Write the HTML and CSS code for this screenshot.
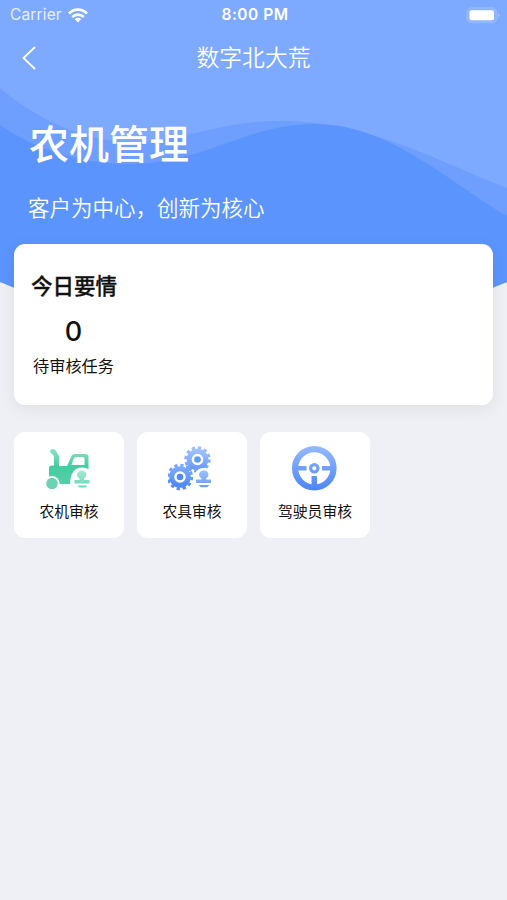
FILE: index.html
```html
<!DOCTYPE html>
<html lang="zh-CN">
<head>
    <meta charset="UTF-8">
    <meta name="viewport" content="width=device-width, initial-scale=1.0">
    <title>数字北大荒</title>
    <link rel="stylesheet" href="styles.css">
</head>

<body>
    <header class="hero">
        <svg class="hero-bg" viewBox="0 0 507 310" preserveAspectRatio="none">
            <path fill="#7da9ff" d="M0 0H507V282Q380 310 253 310T0 282Z"/>
            <path fill="#6e9fff" d="M0 88C35 118 85 143 135 142C185 141 220 121 280 121C365 120 430 158 507 188V282Q380 310 253 310T0 282Z"/>
            <path fill="#5c94fe" d="M0 125C35 149 80 164 130 164C205 164 245 124 315 124C390 124 450 183 507 216V282L485 291Q253 330 22 291L0 282Z"/>
        </svg>

        <div class="hero-content">
            <div class="status-bar">
                <div class="carrier">
                    <span>Carrier</span>
                    <svg width="20" height="15" viewBox="0 0 20 15" fill="none" stroke="#fff" stroke-width="2.7">
                        <path d="M1 5.5C6 .4 14 .4 19 5.5"/>
                        <path d="M4.2 9C7.6 5.8 12.4 5.8 15.8 9"/>
                        <path fill="#fff" stroke="none" d="M6.8 11.2Q10 8.4 13.2 11.2L10 14.6Z"/>
                    </svg>
                </div>
                <div class="time">8:00 PM</div>
                <svg class="battery" width="34" height="17" viewBox="0 0 34 17">
                    <rect x=".8" y=".8" width="30" height="15" rx="4.5" fill="#8fb6ff" stroke="#98bbff"/>
                    <path d="M32 6Q35 8.300 32 10.500Z" fill="#a3c3ff"/>
                    <rect x="3.500" y="3.300" width="24.500" height="10" rx="2" fill="#fff"/>
                </svg>
            </div>

            <nav class="nav-bar">
                <svg class="back" width="14" height="24" viewBox="0 0 14 24" fill="none" stroke="#fff" stroke-width="1.8">
                    <path d="M13 1L1.500 12L13 23"/>
                </svg>
                <div class="nav-title">数字北大荒</div>
            </nav>

            <h1>农机管理</h1>
            <p class="slogan">客户为中心，创新为核心</p>
        </div>
    </header>

    <main>
        <section class="card">
            <h2>今日要情</h2>
            <div class="stat">
                <div class="stat-num">0</div>
                <div class="stat-label">待审核任务</div>
            </div>
        </section>

        <section class="menu">
            <div class="menu-item">
                <svg width="48" height="48" viewBox="0 0 48 48">
                    <defs>
                        <linearGradient id="green" x1="0" y1="0" x2="0" y2="1">
                            <stop offset="0" stop-color="#8ce2c5"/>
                            <stop offset=".5" stop-color="#45cca1"/>
                            <stop offset="1" stop-color="#55cfa9"/>
                        </linearGradient>
                        <linearGradient id="mint" x1="0" y1="0" x2="0" y2="1">
                            <stop offset="0" stop-color="#a7e8d4"/>
                            <stop offset="1" stop-color="#6cd5b5"/>
                        </linearGradient>
                    </defs>
                    <path fill="url(#green)" fill-rule="evenodd" d="M5 7Q5 4 8 4Q10 4 11 6L14 11V21H22L26 12Q27 9 30 9H40Q43.500 9 43.500 12V39H4V23Q4 20.500 6.500 20.500H9V11L5 7ZM26.500 20H39.500V14Q39.500 12 37.500 12H31.500Q29.500 12 28.500 14Z"/>
                    <circle cx="7" cy="38.500" r="7.500" fill="#fff"/>
                    <circle cx="7" cy="38.500" r="5.800" fill="#6bd3b3"/>
                    <path fill="#fff" d="M25 41Q25 22.500 37 22.500Q46 22.500 48 31V46H26Z"/>
                    <path fill="url(#mint)" d="M32 29.500A4.800 4.800 0 0 1 41.500 29.500Q41.500 32 39 33.500V35H44.500V38.500H29.500V35H34.500V33.500Q32 32 32 29.500ZM33 40.500H42Q42 42.500 40 42.500H35Q33 42.500 33 40.500Z"/>
                </svg>
                <span>农机审核</span>
            </div>

            <div class="menu-item">
                <svg width="48" height="48" viewBox="0 0 48 48">
                    <defs>
                        <linearGradient id="blueLight" x1="0" y1="0" x2="0" y2="1">
                            <stop offset="0" stop-color="#9dc0ff"/>
                            <stop offset="1" stop-color="#6b9cfd"/>
                        </linearGradient>
                        <linearGradient id="blue" x1="0" y1="0" x2="0" y2="1">
                            <stop offset="0" stop-color="#79a8fe"/>
                            <stop offset="1" stop-color="#4f89fa"/>
                        </linearGradient>
                    </defs>
                    <g fill="none" stroke="url(#blueLight)">
                        <circle cx="29.500" cy="14.500" r="8.300" stroke-width="5"/>
                        <circle cx="29.500" cy="14.500" r="11.800" stroke-width="2.800" stroke-dasharray="3.300 2.878"/>
                    </g>
                    <circle cx="29.500" cy="14.500" r="3.300" fill="#6399fc"/>
                    <g fill="none" stroke="url(#blue)">
                        <circle cx="12" cy="32" r="8.300" stroke-width="5"/>
                        <circle cx="12" cy="32" r="11.800" stroke-width="2.800" stroke-dasharray="3.300 2.878"/>
                    </g>
                    <circle cx="12" cy="32" r="3.300" fill="#4f89fa"/>
                    <circle cx="21" cy="23.300" r="2.200" fill="none" stroke="#6b9cfd" stroke-width="1.500"/>
                    <path fill="#fff" d="M25.500 42Q24 23 35.500 23Q46 23 48 31V46H26Z"/>
                    <path fill="url(#blueLight)" d="M31 29.500A4.800 4.800 0 0 1 40.500 29.500Q40.500 32 38 33.500V34.500H43V38H28V34.500H33.500V33.500Q31 32 31 29.500ZM31 40H41Q40.500 42.200 38.500 42.200H33.500Q31.500 42.200 31 40Z"/>
                </svg>
                <span>农具审核</span>
            </div>

            <div class="menu-item">
                <svg width="48" height="48" viewBox="0 0 48 48">
                    <defs>
                        <linearGradient id="wheel" gradientUnits="userSpaceOnUse" x1="0" y1="1" x2="0" y2="46">
                            <stop offset="0" stop-color="#94baff"/>
                            <stop offset="1" stop-color="#4c85f8"/>
                        </linearGradient>
                    </defs>
                    <circle cx="23.300" cy="23.300" r="19.200" fill="none" stroke="url(#wheel)" stroke-width="6.200"/>
                    <circle cx="23.300" cy="23.300" r="3.700" fill="none" stroke="url(#wheel)" stroke-width="3.200"/>
                    <path fill="url(#wheel)" d="M6 21H15.500V25.500H6ZM31 21H41V25.500H31ZM20.500 31H26V41H20.500Z"/>
                </svg>
                <span>驾驶员审核</span>
            </div>
        </section>
    </main>
</body>
</html>
```

FILE: styles.css
```css
* {
    box-sizing: border-box;
}

body {
    margin: 0;
    min-height: 100vh;
    background-color: #eef0f5;
    color: #111;
    font-family: "Noto Sans CJK SC", "Noto Sans", sans-serif;
}

svg {
    display: block;
    flex-shrink: 0;
}

.hero {
    display: grid;
    height: 310px;
    color: white;
}

.hero-bg,
.hero-content {
    grid-area: 1 / 1;
}

.hero-bg {
    width: 100%;
    height: 310px;
}

.status-bar {
    display: grid;
    grid-template-columns: 1fr auto 1fr;
    align-items: center;
    height: 29px;
    padding: 0 7px 0 10px;
    font-family: Inter, sans-serif;
    font-size: 15.5px;
    line-height: 30px;
}

.carrier {
    display: flex;
    align-items: center;
    gap: 6px;
    color: #e6efff;
    letter-spacing: 0.15px;
}

.time {
    font-weight: 600;
    letter-spacing: 0.5px;
}

.battery {
    justify-self: end;
}

.nav-bar {
    display: grid;
    grid-template-columns: 1fr auto 1fr;
    align-items: center;
    height: 57px;
    padding: 0 22px;
}

.nav-title {
    margin-top: -3px;
    font-size: 22.8px;
    font-weight: 350;
}

h1 {
    margin: 26px 0 0 29px;
    font-size: 40px;
    font-weight: 500;
    line-height: 60px;
}

.slogan {
    margin: 19px 0 0 28px;
    font-size: 21.5px;
    font-weight: 350;
    line-height: 32px;
}

main {
    padding: 0 14px;
}

.card {
    position: relative;
    height: 161px;
    margin-top: -66px;
    padding: 25px 17px;
    border-radius: 11px;
    background-color: white;
    box-shadow: 0 4px 16px rgba(0, 0, 0, 0.07);
}

h2 {
    margin: 0;
    font-size: 21.5px;
    font-weight: 500;
    line-height: 32px;
    -webkit-text-stroke: 0.3px #111;
}

.stat {
    display: flex;
    flex-direction: column;
    width: 85px;
    margin-top: 13px;
    text-align: center;
}

.stat-num {
    font-family: Inter, sans-serif;
    font-size: 27px;
    font-weight: 500;
    line-height: 36px;
}

.stat-label {
    font-size: 16.2px;
    line-height: 30px;
    white-space: nowrap;
}

.menu {
    display: grid;
    grid-template-columns: repeat(3, 110px);
    gap: 13px;
    margin-top: 27px;
}

.menu-item {
    display: flex;
    flex-direction: column;
    align-items: center;
    height: 106px;
    padding-top: 13px;
    border-radius: 11px;
    background-color: white;
    font-size: 14.8px;
    line-height: 24px;
}

.menu-item span {
    margin-top: 6px;
}
```
